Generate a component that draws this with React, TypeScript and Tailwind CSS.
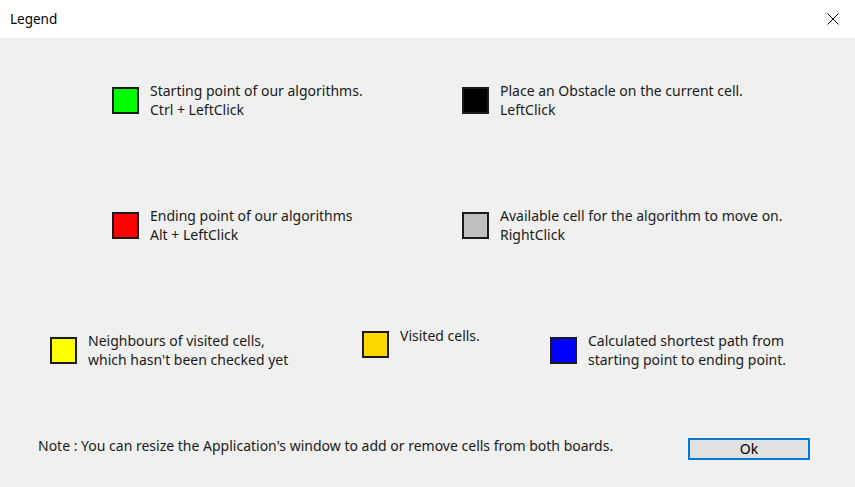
import type { ReactNode } from 'react'

function Swatch({ color }: { color: string }) {
  return <div className={`w-[27px] h-[27px] shrink-0 border-2 border-[#1a1a1a] ${color}`} />
}

function Item({ color, children }: { color: string; children: ReactNode }) {
  return (
    <div className="flex items-center gap-[11px]">
      <Swatch color={color} />
      <div className="text-[14px] leading-[19px] text-[#1a1a1a]">{children}</div>
    </div>
  )
}

export default function App() {
  return (
    <div
      className="w-[855px] h-[487px] flex flex-col bg-[#f0f0f0] overflow-hidden"
      style={{ fontFamily: '"Noto Sans", "Open Sans", sans-serif' }}
    >
      {/* Title bar */}
      <div className="h-[38px] shrink-0 bg-white flex items-center justify-between pl-[10px] pr-[16px]">
        <span className="text-[13.5px] text-black">Legend</span>
        <svg width="12" height="12" viewBox="0 0 12 12" className="text-black">
          <path d="M0.5 0.5 L11.5 11.5 M11.5 0.5 L0.5 11.5" stroke="currentColor" strokeWidth="1" />
        </svg>
      </div>

      {/* Body */}
      <div className="flex-1 flex flex-col">
        <div className="grid grid-cols-[350px_1fr] pl-[112px] pt-[43px]">
          <Item color="bg-[#00ff00]">
            Starting point of our algorithms.<br />Ctrl + LeftClick
          </Item>
          <Item color="bg-black">
            Place an Obstacle on the current cell.<br />LeftClick
          </Item>
        </div>

        <div className="grid grid-cols-[350px_1fr] pl-[112px] pt-[87px]">
          <Item color="bg-[#ff0000]">
            Ending point of our algorithms<br />Alt + LeftClick
          </Item>
          <Item color="bg-[#c0c0c0]">
            Available cell for the algorithm to move on.<br />RightClick
          </Item>
        </div>

        <div className="grid grid-cols-[312px_188px_1fr] pl-[50px] pt-[87px]">
          <Item color="bg-[#ffff00]">
            Neighbours of visited cells,<br />which hasn't been checked yet
          </Item>
          <div className="flex items-start gap-[11px]">
            <Swatch color="bg-[#ffd700]" />
            <div className="text-[14px] leading-[19px] text-[#1a1a1a] -mt-[5px]">Visited cells.</div>
          </div>
          <Item color="bg-[#0000ff]">
            Calculated shortest path from<br />starting point to ending point.
          </Item>
        </div>

        <div className="flex items-center justify-between pl-[38px] pr-[45px] pt-[69px]">
          <span className="text-[14px] text-[#1a1a1a] -mt-[7px]">
            Note : You can resize the Application's window to add or remove cells from both boards.
          </span>
          <button className="w-[122px] h-[22px] border-2 border-[#0078d7] bg-[#e1e1e1] text-[14px] leading-none text-black flex items-center justify-center">
            Ok
          </button>
        </div>
      </div>
    </div>
  )
}
